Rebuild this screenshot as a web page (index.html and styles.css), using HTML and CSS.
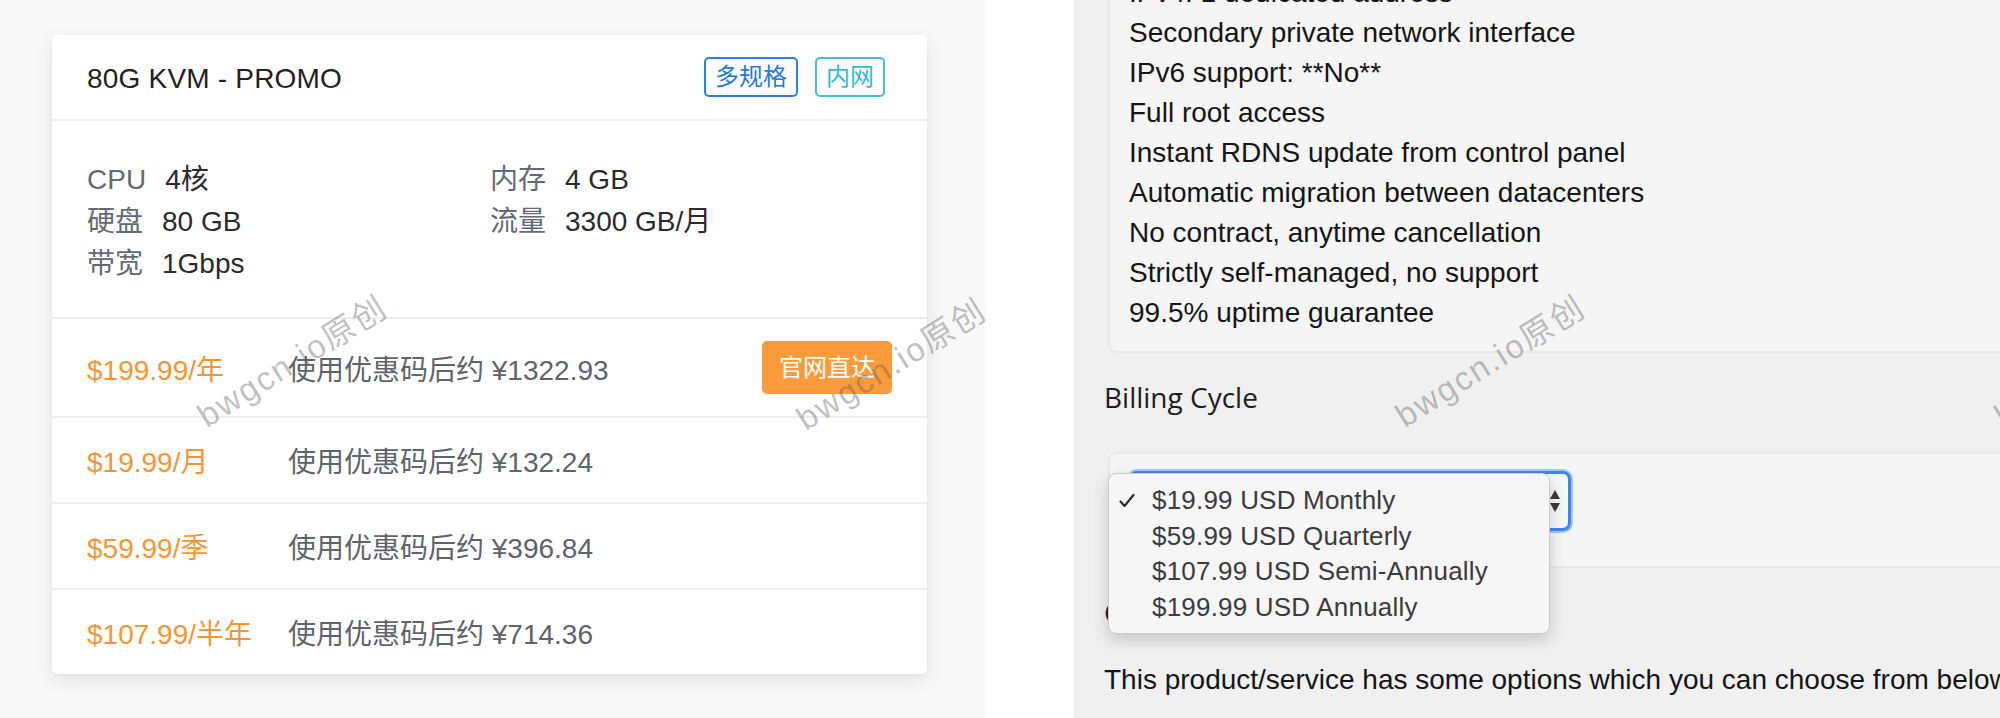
FILE: index.html
```html
<!DOCTYPE html>
<html lang="zh-CN">
<head>
<meta charset="utf-8">
<title>80G KVM - PROMO</title>
<link rel="stylesheet" href="styles.css">
</head>
<body>
<div class="page">
  <div class="left">
    <div class="card">
      <div class="card-head">
        <span class="title">80G KVM - PROMO</span>
        <div class="tags">
          <span class="tag tag-blue">多规格</span>
          <span class="tag tag-cyan">内网</span>
        </div>
      </div>
      <div class="specs">
        <div class="spec"><span class="label">CPU</span><span class="val">4核</span></div>
        <div class="spec"><span class="label">内存</span><span class="val">4 GB</span></div>
        <div class="spec"><span class="label">硬盘</span><span class="val">80 GB</span></div>
        <div class="spec"><span class="label">流量</span><span class="val">3300 GB/月</span></div>
        <div class="spec"><span class="label">带宽</span><span class="val">1Gbps</span></div>
      </div>
      <div class="price-row first">
        <span class="price">$199.99/年</span>
        <span class="desc">使用优惠码后约 ¥1322.93</span>
        <a class="btn">官网直达</a>
      </div>
      <div class="price-row">
        <span class="price">$19.99/月</span>
        <span class="desc">使用优惠码后约 ¥132.24</span>
      </div>
      <div class="price-row">
        <span class="price">$59.99/季</span>
        <span class="desc">使用优惠码后约 ¥396.84</span>
      </div>
      <div class="price-row last">
        <span class="price">$107.99/半年</span>
        <span class="desc">使用优惠码后约 ¥714.36</span>
      </div>
    </div>
  </div>
  <div class="gap"></div>
  <div class="right">
    <div class="listbox">
      <div class="line">IPv4: 1 dedicated address</div>
      <div class="line">Secondary private network interface</div>
      <div class="line">IPv6 support: **No**</div>
      <div class="line">Full root access</div>
      <div class="line">Instant RDNS update from control panel</div>
      <div class="line">Automatic migration between datacenters</div>
      <div class="line">No contract, anytime cancellation</div>
      <div class="line">Strictly self-managed, no support</div>
      <div class="line">99.5% uptime guarantee</div>
    </div>
    <h3 class="heading">Billing Cycle</h3>
    <div class="selectbox">
      <div class="select">
        <span class="sel-text">$19.99 USD Monthly</span>
        <svg class="arrows" width="12" height="24" viewBox="0 0 12 24"><path d="M6 1 L11 10 L1 10 Z" fill="#3a3a3a"/><path d="M1 14 L11 14 L6 23 Z" fill="#3a3a3a"/></svg>
      </div>
    </div>
    <h3 class="heading">Configurable Options</h3>
    <p class="para">This product/service has some options which you can choose from below to customise your order.</p>
    <ul class="menu">
      <li class="opt checked"><svg class="check" width="16" height="16" viewBox="0 0 16 16"><path d="M1.5 8.5 L5.5 13 L14.5 2" fill="none" stroke="#2b2b2b" stroke-width="2.2" stroke-linecap="round" stroke-linejoin="round"/></svg>$19.99 USD Monthly</li>
      <li class="opt">$59.99 USD Quarterly</li>
      <li class="opt">$107.99 USD Semi-Annually</li>
      <li class="opt">$199.99 USD Annually</li>
    </ul>
  </div>
</div>
<span class="wm wm1">bwgcn.io原创</span>
<span class="wm wm2">bwgcn.io原创</span>
<span class="wm wm3">bwgcn.io原创</span>
<span class="wm wm4">bwgcn.io原创</span>
</body>
</html>
```

FILE: styles.css
```css
* { box-sizing: border-box; }
html, body {
  margin: 0;
  padding: 0;
  width: 2000px;
  height: 718px;
  overflow: hidden;
  background: #ffffff;
  font-family: "Liberation Sans", "Noto Sans CJK SC", sans-serif;
}
.page {
  display: flex;
  width: 2000px;
  height: 718px;
}
.left {
  width: 986px;
  height: 718px;
  background: #f8f8f8;
  padding: 35px 0 0 52px;
}
.gap {
  width: 88px;
  background: #ffffff;
}
.card {
  width: 875px;
  background: #ffffff;
  border-radius: 5px;
  box-shadow: 0 6px 18px rgba(0, 0, 0, 0.09), 0 1px 3px rgba(0, 0, 0, 0.04);
  overflow: hidden;
}
.card-head {
  height: 86px;
  display: flex;
  align-items: center;
  justify-content: space-between;
  padding: 0 42px 0 35px;
  border-bottom: 2px solid #efefef;
}
.title {
  font-size: 28px;
  color: #222222;
  letter-spacing: 0.2px;
  padding-top: 4px;
}
.tags {
  display: flex;
  gap: 17px;
}
.tag {
  height: 40px;
  line-height: 36px;
  padding: 0 9px;
  font-size: 24px;
  border: 2px solid;
  border-radius: 5px;
}
.tag-blue { color: #2479e0; border-color: #2d7fe3; }
.tag-cyan { color: #33b9d3; border-color: #45c1d8; }

.specs {
  display: grid;
  grid-template-columns: 403px 1fr;
  padding: 38px 35px 32px 35px;
  border-bottom: 2px solid #efefef;
}
.spec {
  height: 42px;
  line-height: 42px;
  font-size: 28px;
  white-space: nowrap;
}
.label {
  color: #656a70;
  margin-right: 19px;
}
.val { color: #2b2b2b; }

.price-row {
  height: 86px;
  display: flex;
  align-items: center;
  padding: 0 35px;
  border-bottom: 2px solid #efefef;
  font-size: 28px;
  white-space: nowrap;
}
.price-row.first { height: 99px; }
.price-row.last { border-bottom: none; height: 84px; }
.price {
  width: 201px;
  color: #f79433;
}
.desc { color: #60646a; }
.btn {
  margin-left: auto;
  width: 130px;
  height: 53px;
  line-height: 53px;
  text-align: center;
  background: #fc9b3c;
  color: #ffffff;
  font-size: 24px;
  border-radius: 5px;
}

.right {
  flex: 1;
  position: relative;
  overflow: hidden;
  background: #f0f0f0;
  padding-left: 30px;
}
.listbox {
  margin: -48px -60px 0 4px;
  background: #f5f5f5;
  border: 2px solid #e9e9e9;
  border-radius: 9px;
  padding: 19px 0 18px 19px;
}
.line {
  height: 40px;
  line-height: 40px;
  font-size: 28px;
  color: #151515;
  white-space: nowrap;
}
.heading {
  margin: 24px 0 0 0;
  height: 40px;
  line-height: 40px;
  font-family: "Open Sans", "Liberation Sans", sans-serif;
  font-weight: 400;
  font-size: 28px;
  color: #1e1e1e;
}
.selectbox {
  margin: 35px -60px 0 4px;
  height: 116px;
  background: #f5f5f5;
  border: 2px solid #e9e9e9;
  border-radius: 9px;
  padding: 15px 0 0 19px;
}
.select {
  position: relative;
  width: 442px;
  height: 60px;
  margin-top: 2px;
  border: 3px solid #3f86ea;
  border-radius: 8px;
  box-shadow: 0 0 0 2px #a6c6f2;
  background: #f7f7f7;
  padding-left: 14px;
  line-height: 54px;
  font-size: 26px;
  color: #333333;
}
.arrows {
  position: absolute;
  right: 7px;
  top: 15px;
}
.para {
  margin: 28px 0 0 0;
  height: 40px;
  line-height: 40px;
  font-size: 28px;
  color: #151515;
  white-space: nowrap;
}
.menu {
  position: absolute;
  top: 473px;
  left: 34px;
  width: 442px;
  height: 161px;
  margin: 0;
  padding: 9px 0;
  list-style: none;
  background: #f6f6f6;
  border: 1px solid #cbcbcb;
  border-radius: 8px;
  box-shadow: 0 6px 16px rgba(0, 0, 0, 0.18);
}
.opt {
  position: relative;
  height: 35.5px;
  line-height: 35.5px;
  padding-left: 43px;
  font-size: 26px;
  letter-spacing: 0.2px;
  color: #3b3b3b;
  white-space: nowrap;
}
.check {
  position: absolute;
  left: 10px;
  top: 10px;
}

.wm {
  position: absolute;
  font-family: "Liberation Sans", "Noto Sans CJK SC", sans-serif;
  font-size: 33px;
  letter-spacing: 2px;
  color: rgba(90, 90, 90, 0.38);
  white-space: nowrap;
  transform: translate(-50%, -50%) rotate(-32deg);
  pointer-events: none;
}
.wm1 { left: 291px; top: 359px; }
.wm2 { left: 890px; top: 362px; }
.wm3 { left: 1489px; top: 359px; }
.wm4 { left: 2088px; top: 359px; }
```
